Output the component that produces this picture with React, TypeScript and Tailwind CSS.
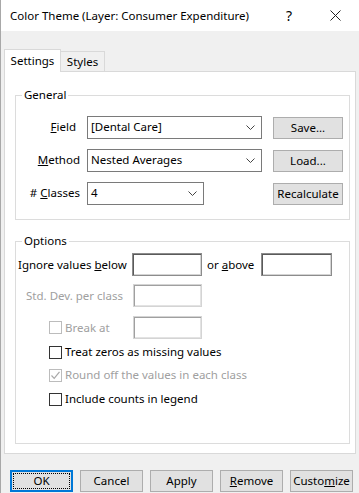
import React from "react";

function Chevron() {
  return (
    <svg width="9" height="5" viewBox="0 0 9 5" className="shrink-0">
      <path d="M0.5 0.5 L4.5 4.5 L8.5 0.5" fill="none" stroke="#444" strokeWidth="1" />
    </svg>
  );
}

function Select({ value, width }: { value: string; width: string }) {
  return (
    <div className={`${width} h-[23px] bg-white border border-[#7a7a7a] flex items-center justify-between pl-[3px] pr-[6px]`}>
      <span className="text-[11.5px]">{value}</span>
      <Chevron />
    </div>
  );
}

function Btn({ children, className = "" }: { children: React.ReactNode; className?: string }) {
  return (
    <div className={`h-[22px] bg-[#e1e1e1] border border-[#adadad] flex items-center justify-center whitespace-nowrap ${className}`}>
      {children}
    </div>
  );
}

function Input({ width, disabled = false }: { width: string; disabled?: boolean }) {
  return (
    <div
      className={`${width} h-[23px] bg-white border shrink-0 ${
        disabled
          ? "border-[#d4d4d4] shadow-[inset_1px_1px_0_#a0a0a0,inset_-1px_-1px_0_#e3e3e3]"
          : "border-[#8c8c8c] shadow-[inset_1px_1px_0_#5a5a5a,inset_-1px_-1px_0_#d4d4d4]"
      }`}
    />
  );
}

function Check({ checked = false, disabled = false }: { checked?: boolean; disabled?: boolean }) {
  return (
    <div
      className={`w-[13px] h-[13px] bg-white border flex items-center justify-center shrink-0 ${
        disabled ? "border-[#bcbcbc]" : "border-[#333333]"
      }`}
    >
      {checked && (
        <svg width="11" height="11" viewBox="0 0 11 11">
          <path d="M1.5 5.5 L4.2 8.3 L9.5 1.8" fill="none" stroke="#a8a8a8" strokeWidth="1.2" />
        </svg>
      )}
    </div>
  );
}

export default function App() {
  return (
    <div className="w-[359px] h-[493px] bg-[#f0f0f0] text-[11.5px] leading-[16px] text-black font-['Noto_Sans',sans-serif] overflow-hidden border-l border-[#a8a8a8] whitespace-nowrap">
      {/* title bar */}
      <div className="h-[31px] bg-white flex items-center">
        <span className="pl-[9px] flex-1 text-[11.5px]">Color Theme (Layer: Consumer Expenditure)</span>
        <span className="w-[46px] text-center text-[14px]">?</span>
        <span className="w-[46px] flex justify-center mr-[1px]">
          <svg width="11" height="11" viewBox="0 0 11 11">
            <path d="M0.5 0.5 L10.5 10.5 M10.5 0.5 L0.5 10.5" stroke="#222" strokeWidth="1" />
          </svg>
        </span>
      </div>

      <div className="pt-[17px] pl-[3px]">
        {/* tabs */}
        <div className="flex items-end h-[23px]">
          <div className="w-[57px] h-[23px] bg-white border border-[#d9d9d9] border-b-0 relative z-10 -mb-px pb-px flex items-center justify-center">
            Settings
          </div>
          <div className="w-[44px] h-[20px] bg-[#f0f0f0] border border-[#d9d9d9] border-l-0 border-b-0 flex items-center justify-center">
            Styles
          </div>
        </div>

        {/* panel */}
        <div className="w-[352px] h-[383px] bg-white border border-[#d9d9d9] pt-[15px] pl-[10px]">
          <fieldset className="w-[335px] border border-[#dcdcdc] pb-[14px]">
            <legend className="ml-[6px] px-[2px]">General</legend>
            <div className="mt-[12px] flex flex-col gap-[9px]">
              <div className="flex items-center">
                <span className="w-[60px] text-right">
                  <span className="underline">F</span>ield
                </span>
                <div className="ml-[11px]">
                  <Select value="[Dental Care]" width="w-[175px]" />
                </div>
                <Btn className="ml-[11px] w-[70px] mt-[2px]">Save...</Btn>
              </div>
              <div className="flex items-center">
                <span className="w-[64px] text-right">
                  <span className="underline">M</span>ethod
                </span>
                <div className="ml-[7px]">
                  <Select value="Nested Averages" width="w-[175px]" />
                </div>
                <Btn className="ml-[11px] w-[70px] mt-[2px]">Load...</Btn>
              </div>
              <div className="flex items-center">
                <span className="w-[64px] text-right">
                  # <span className="underline">C</span>lasses
                </span>
                <div className="ml-[7px]">
                  <Select value="4" width="w-[117px]" />
                </div>
                <Btn className="ml-[69px] w-[70px] mt-[2px]">Recalculate</Btn>
              </div>
            </div>
          </fieldset>

          <fieldset className="w-[335px] h-[211px] border border-[#dcdcdc] mt-[13px]">
            <legend className="ml-[6px] px-[2px]">Options</legend>
            <div className="mt-[4px] flex items-center">
              <span className="ml-[2px] w-[114px]">
                Ignore values <span className="underline">b</span>elow
              </span>
              <Input width="w-[70px]" />
              <span className="ml-[5px] w-[54px]">
                or <span className="underline">a</span>bove
              </span>
              <Input width="w-[71px]" />
            </div>
            <div className="mt-[8px] flex items-center">
              <span className="w-[107px] text-right text-[#a0a0a0]">Std. Dev. per class</span>
              <div className="ml-[10px]">
                <Input width="w-[69px]" disabled />
              </div>
            </div>
            <div className="mt-[9px] flex items-center">
              <div className="ml-[33px]">
                <Check disabled />
              </div>
              <span className="ml-[3px] w-[68px] text-[#a0a0a0]">Break at</span>
              <Input width="w-[69px]" disabled />
            </div>
            <div className="mt-[5px] flex items-center">
              <div className="ml-[33px]">
                <Check />
              </div>
              <span className="ml-[3px]">Treat zeros as missing values</span>
            </div>
            <div className="mt-[7px] flex items-center">
              <div className="ml-[33px]">
                <Check checked disabled />
              </div>
              <span className="ml-[3px] text-[#a0a0a0]">Round off the values in each class</span>
            </div>
            <div className="mt-[8px] flex items-center">
              <div className="ml-[33px]">
                <Check />
              </div>
              <span className="ml-[3px]">Include counts in legend</span>
            </div>
          </fieldset>
        </div>

        {/* buttons */}
        <div className="mt-[16px] ml-[6px] flex gap-[7px]">
          <div className="w-[63px] h-[22px] bg-[#e1e1e1] border-2 border-[#0078d7] p-px">
            <div className="w-full h-full border border-dotted border-black flex items-center justify-center">OK</div>
          </div>
          <Btn className="w-[63px]">Cancel</Btn>
          <Btn className="w-[63px]">Apply</Btn>
          <Btn className="w-[63px]">
            <span>
              <span className="underline">R</span>emove
            </span>
          </Btn>
          <Btn className="w-[63px]">
            <span>
              Custo<span className="underline">m</span>ize
            </span>
          </Btn>
        </div>
      </div>
    </div>
  );
}
